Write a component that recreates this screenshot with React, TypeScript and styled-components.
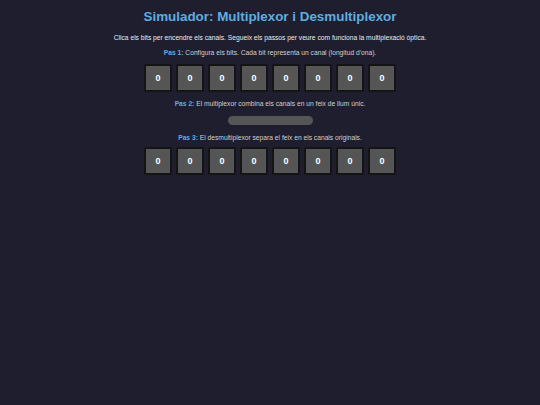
import styled, { createGlobalStyle } from "styled-components";

const GlobalStyle = createGlobalStyle`
    html, body {
        margin: 0;
        padding: 0;
        background: #1e1e2f;
        font-family: "Liberation Sans", Arial, sans-serif;
        color: #dcdcdc;
    }
`;

const Page = styled.main`
    min-height: 405px;
    display: flex;
    flex-direction: column;
    align-items: center;
    padding: 8px 10px;
    box-sizing: border-box;
`;

const Title = styled.h1`
    margin: 0;
    font-size: 13.4px;
    color: #5dade2;
    line-height: 17px;
`;

const Intro = styled.p`
    margin: 9px 0 0;
    font-size: 6.7px;
    line-height: 8px;
    color: #ececec;
`;

const Step = styled.p<{ $gap: number }>`
    margin: ${p => p.$gap}px 0 0;
    font-size: 6.7px;
    line-height: 8px;
    color: #d0d0d0;
    b {
        color: #5dade2;
    }
`;

const Bits = styled.div<{ $gap: number }>`
    display: flex;
    gap: 4px;
    margin-top: ${p => p.$gap}px;
`;

const Bit = styled.button<{ $on: boolean }>`
    width: 28px;
    height: 28px;
    padding: 0;
    box-sizing: border-box;
    border: 2px solid #141414;
    border-radius: 2px;
    background: ${p => (p.$on ? "#5dade2" : "#555")};
    color: #ffffff;
    font-family: "Liberation Sans", Arial, sans-serif;
    font-weight: bold;
    font-size: 9px;
    cursor: pointer;
`;

const Beam = styled.div`
    width: 85px;
    height: 9px;
    margin-top: 8px;
    border-radius: 5px;
    background: #555;
`;

const canals = [0, 0, 0, 0, 0, 0, 0, 0];

function BitRow({ gap }: { gap: number }) {
    return (
        <Bits $gap={gap}>
            {canals.map((b, i) => (
                <Bit key={i} $on={b === 1}>{b}</Bit>
            ))}
        </Bits>
    );
}

export default function App() {
    return (
        <>
            <GlobalStyle />
            <Page>
                <Title>Simulador: Multiplexor i Desmultiplexor</Title>
                <Intro>Clica els bits per encendre els canals. Segueix els passos per veure com funciona la multiplexació òptica.</Intro>
                <Step $gap={7}><b>Pas 1:</b> Configura els bits. Cada bit representa un canal (longitud d'ona).</Step>
                <BitRow gap={7} />
                <Step $gap={8}><b>Pas 2:</b> El multiplexor combina els canals en un feix de llum únic.</Step>
                <Beam />
                <Step $gap={9}><b>Pas 3:</b> El desmultiplexor separa el feix en els canals originals.</Step>
                <BitRow gap={5} />
            </Page>
        </>
    );
}
